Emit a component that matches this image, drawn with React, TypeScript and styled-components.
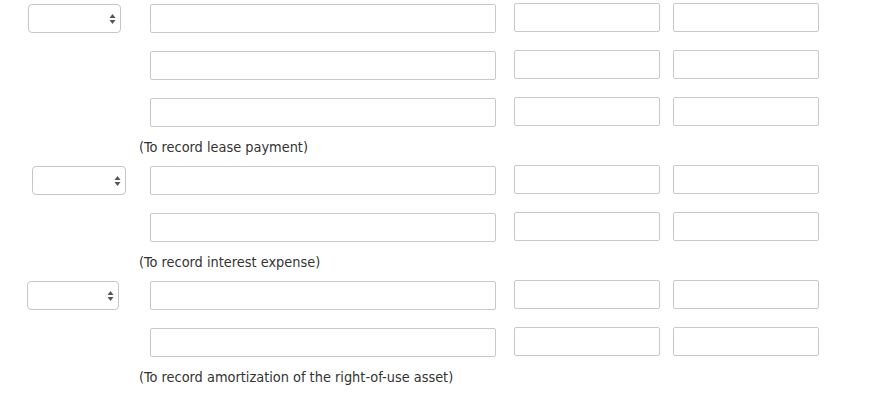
import styled, { createGlobalStyle } from "styled-components";

type Entry = {
  selectOffset: number;
  selectWidth: number;
  rows: number;
  note: string;
};

const entries: Entry[] = [
  { selectOffset: 28, selectWidth: 93, rows: 3, note: "(To record lease payment)" },
  { selectOffset: 32, selectWidth: 94, rows: 2, note: "(To record interest expense)" },
  {
    selectOffset: 27,
    selectWidth: 92,
    rows: 2,
    note: "(To record amortization of the right-of-use asset)",
  },
];

const GlobalStyle = createGlobalStyle`
  body {
    margin: 0;
    background: #fff;
    font-family: "DejaVu Sans Condensed", "DejaVu Sans", Verdana, sans-serif;
  }
`;

const Arrows = () => (
  <svg width="7" height="12" viewBox="0 0 7 12">
    <path d="M3.5 1 L6.5 5 L0.5 5 Z" fill="#555" />
    <path d="M3.5 11 L6.5 7 L0.5 7 Z" fill="#555" />
  </svg>
);

const App = () => {
  return (
    <>
      <GlobalStyle />
      <Page>
        {entries.map((entry, i) => (
          <Section key={i}>
            {Array.from({ length: entry.rows }).map((_, r) => (
              <Row key={r}>
                <SelectCell>
                  {r === 0 && (
                    <SelectBox $offset={entry.selectOffset} $width={entry.selectWidth}>
                      <Arrows />
                    </SelectBox>
                  )}
                </SelectCell>
                <AccountInput />
                <AmountInput $gap={18} />
                <AmountInput $gap={13} />
              </Row>
            ))}
            <Note>{entry.note}</Note>
          </Section>
        ))}
      </Page>
    </>
  );
};

const Page = styled.div`
  display: flex;
  flex-direction: column;
  padding-top: 4px;
`;

const Section = styled.div`
  display: flex;
  flex-direction: column;
  gap: 18px;
  margin-bottom: 9px;
`;

const Row = styled.div`
  display: flex;
  align-items: flex-start;
  height: 29px;
`;

const SelectCell = styled.div`
  flex: 0 0 150px;
  height: 29px;
`;

const SelectBox = styled.div<{ $offset: number; $width: number }>`
  box-sizing: border-box;
  margin-left: ${(p) => p.$offset}px;
  width: ${(p) => p.$width}px;
  height: 29px;
  border: 1px solid #c6c6c6;
  border-radius: 4px;
  background: #fff;
  display: flex;
  align-items: center;
  justify-content: flex-end;
  padding-right: 4px;
`;

const AccountInput = styled.input`
  box-sizing: border-box;
  flex: 0 0 346px;
  width: 346px;
  height: 29px;
  margin: 0;
  border: 1px solid #c9c9c9;
  border-radius: 2px;
  background: #fff;
`;

const AmountInput = styled.input<{ $gap: number }>`
  box-sizing: border-box;
  flex: 0 0 146px;
  width: 146px;
  height: 29px;
  margin: -1px 0 0 ${(p) => p.$gap}px;
  border: 1px solid #c9c9c9;
  border-radius: 2px;
  background: #fff;
`;

const Note = styled.div`
  margin-top: -8px;
  padding-left: 139px;
  font-size: 14.4px;
  line-height: 20px;
  color: #333;
`;

export default App;
